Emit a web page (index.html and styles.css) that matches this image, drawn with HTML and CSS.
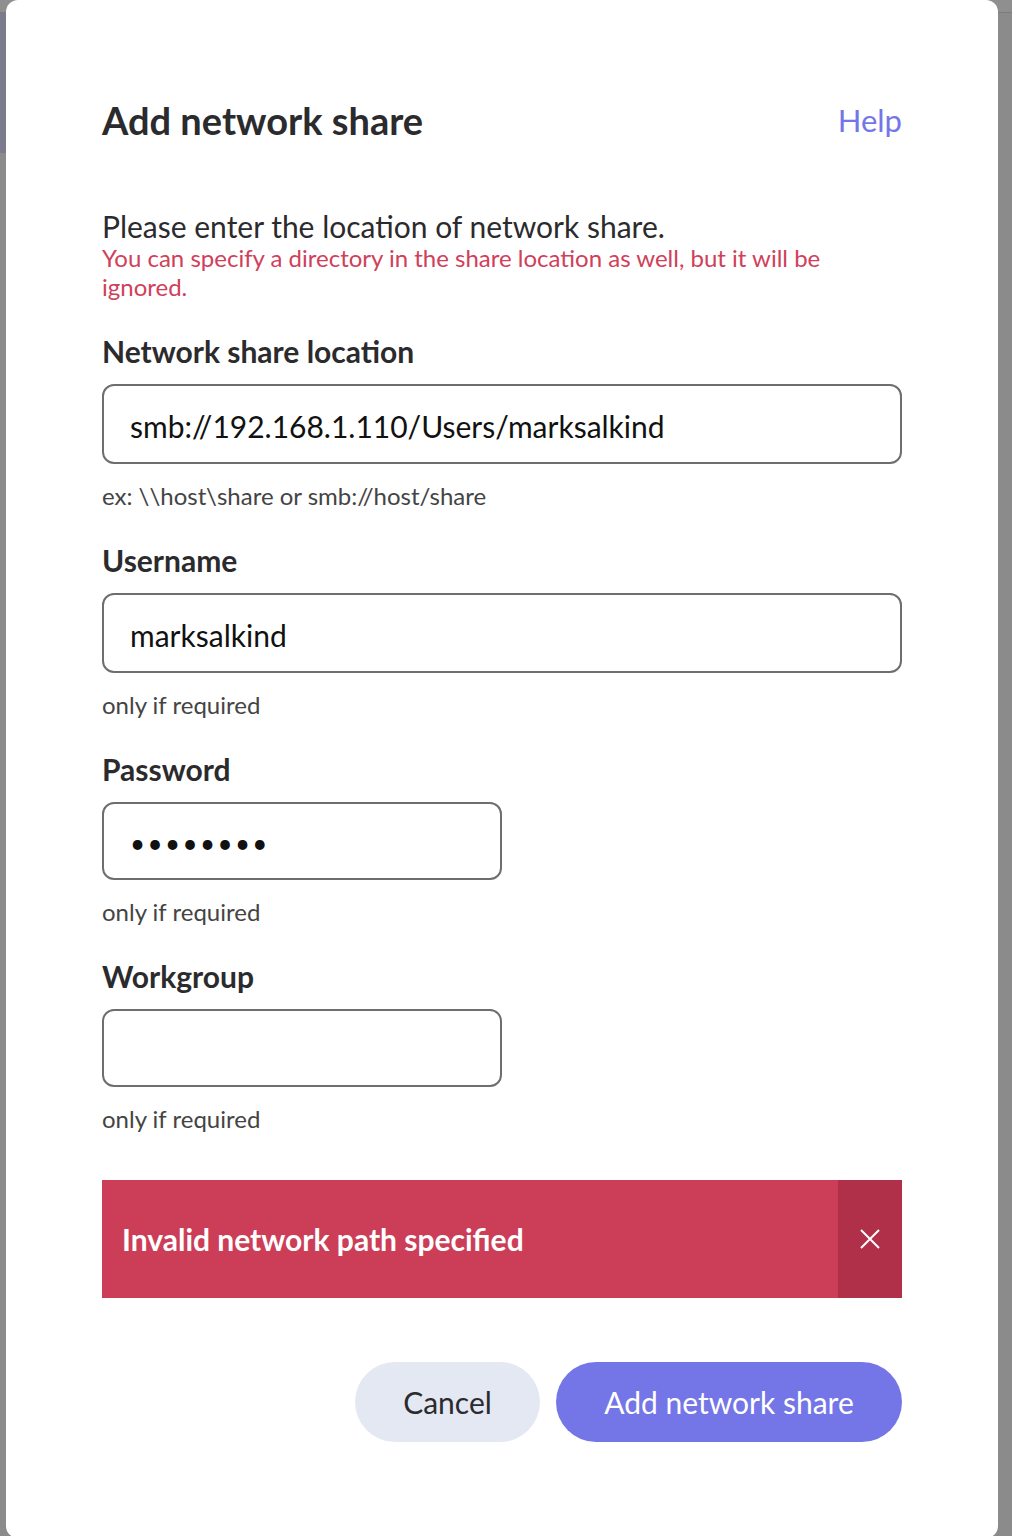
FILE: index.html
```html
<!DOCTYPE html>
<html lang="en">
<head>
    <meta charset="UTF-8">
    <meta name="viewport" content="width=device-width, initial-scale=1.0">
    <title>Add network share</title>
    <link rel="stylesheet" href="styles.css">
</head>
<body>
    <div class="backdrop">
        <div class="topbar"></div>
        <div class="sidebar"></div>
    </div>

    <div class="modal">
        <div class="modal-header">
            <h1>Add network share</h1>
            <a class="help" href="#">Help</a>
        </div>

        <p class="intro">Please enter the location of network share.</p>
        <p class="warning">You can specify a directory in the share location as well, but it will be ignored.</p>

        <form id="shareForm">
            <label for="location">Network share location</label>
            <input type="text" id="location" class="field" value="smb://192.168.1.110/Users/marksalkind">
            <div class="hint">ex: \\host\share or smb://host/share</div>

            <label for="username">Username</label>
            <input type="text" id="username" class="field" value="marksalkind">
            <div class="hint">only if required</div>

            <label for="password">Password</label>
            <input type="password" id="password" class="field small" value="password">
            <div class="hint">only if required</div>

            <label for="workgroup">Workgroup</label>
            <input type="text" id="workgroup" class="field small" value="">
            <div class="hint">only if required</div>

            <div class="alert">
                <span class="alert-text">Invalid network path specified</span>
                <button type="button" class="alert-close" aria-label="Close">
                    <svg width="22" height="22" viewBox="0 0 22 22">
                        <path d="M2 2 L20 20 M20 2 L2 20" stroke="#fff" stroke-width="2" fill="none"/>
                    </svg>
                </button>
            </div>

            <div class="actions">
                <button type="button" class="btn cancel">Cancel</button>
                <button type="submit" class="btn primary">Add network share</button>
            </div>
        </form>
    </div>
</body>
</html>
```

FILE: styles.css
```css
body {
    margin: 0;
    padding: 0;
    font-family: Lato, "Open Sans", sans-serif;
    background-color: #8b8b8b;
    overflow: hidden;
}
.backdrop {
    height: 1536px;
}
.topbar {
    height: 12px;
    background-color: #8f8f8f;
    border-bottom: 1px solid #7c7c7c;
}
.sidebar {
    width: 20px;
    height: 140px;
    background-color: #7c7b8e;
}
.modal {
    position: absolute;
    top: 0;
    left: 6px;
    width: 992px;
    box-sizing: border-box;
    padding: 97px 96px 96px;
    background-color: #fff;
    border-radius: 12px;
}
.modal-header {
    display: flex;
    justify-content: space-between;
    align-items: center;
}
h1 {
    margin: 0;
    font-size: 38px;
    line-height: 46px;
    font-weight: 700;
    color: #2b2b2e;
}
.help {
    font-size: 31px;
    color: #7476e8;
    text-decoration: none;
}
.intro {
    margin: 66px 0 0;
    font-size: 30px;
    line-height: 34px;
    color: #2b2b2e;
}
.warning {
    margin: 0;
    font-size: 24px;
    line-height: 29px;
    color: #d0405a;
    max-width: 740px;
}
form {
    display: flex;
    flex-direction: column;
    align-items: flex-start;
}
label {
    display: block;
    margin-top: 33px;
    margin-bottom: 16px;
    font-size: 30px;
    line-height: 34px;
    font-weight: 700;
    color: #2b2b2e;
}
.field {
    width: 100%;
    height: 80px;
    padding: 3px 26px 0;
    box-sizing: border-box;
    border: 2px solid #6e6e70;
    border-radius: 12px;
    font-family: Lato, sans-serif;
    font-size: 30px;
    color: #111;
    background-color: #fff;
    outline: none;
}
.field.small {
    width: 400px;
    height: 78px;
}
input[type="password"] {
    font-size: 26px;
    letter-spacing: 2.4px;
}
.hint {
    margin-top: 18px;
    font-size: 24px;
    line-height: 28px;
    color: #444;
}
.alert {
    display: flex;
    width: 100%;
    height: 118px;
    margin-top: 47px;
    background-color: #cc3d58;
}
.alert-text {
    flex: 1;
    display: flex;
    align-items: center;
    padding-left: 20px;
    font-size: 30px;
    font-weight: 700;
    color: #fff;
}
.alert-close {
    width: 64px;
    border: none;
    padding: 0;
    background-color: #b03049;
    display: flex;
    align-items: center;
    justify-content: center;
    cursor: pointer;
}
.actions {
    display: flex;
    justify-content: flex-end;
    gap: 16px;
    width: 100%;
    margin-top: 64px;
}
.btn {
    height: 80px;
    border: none;
    border-radius: 40px;
    font-family: Lato, sans-serif;
    font-size: 30px;
    cursor: pointer;
}
.cancel {
    width: 185px;
    background-color: #e4e8f2;
    color: #2b2b2e;
}
.primary {
    width: 346px;
    background-color: #7476e8;
    color: #fff;
}
```
